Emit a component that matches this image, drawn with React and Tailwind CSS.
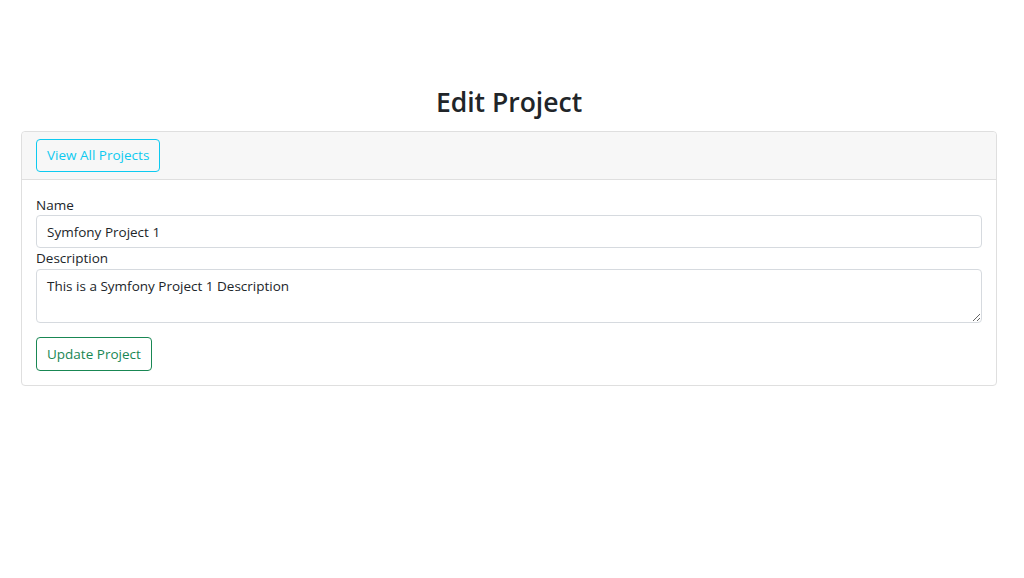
import React from 'react'

const App = () => {
  return (
    <div className="min-h-[578px] bg-white text-[#212529]" style={{ fontFamily: '"Open Sans", "Noto Sans", sans-serif' }}>
      <div className="pl-[21px] pr-[27px] pt-[84px]">
        <h1 className="text-center text-[26.5px] font-semibold leading-[36px] mb-[11px]">Edit Project</h1>
        <div className="border border-[#dfdfdf] rounded-[4px]">
          <div className="bg-[#f7f7f7] border-b border-[#dfdfdf] px-[14px] py-[7px] rounded-t-[4px]">
            <button type="button" className="h-[33px] px-[10px] border border-[#0dcaf0] rounded-[4px] text-[#0dcaf0] text-[13.5px] bg-transparent">
              View All Projects
            </button>
          </div>
          <div className="px-[14px] pt-[15px] pb-[14px]">
            <label className="block text-[13.5px] leading-[20px]">Name</label>
            <input
              type="text"
              defaultValue="Symfony Project 1"
              className="block w-full h-[33px] px-[10px] border border-[#d6dadf] rounded-[4px] text-[13.5px] text-[#212529] outline-none"
            />
            <label className="block text-[13.5px] leading-[20px] mt-0 mb-[1px]">Description</label>
            <textarea
              defaultValue="This is a Symfony Project 1 Description"
              className="block w-full h-[54px] px-[10px] py-[6px] border border-[#d6dadf] rounded-[4px] text-[13.5px] leading-[20px] text-[#212529] outline-none"
            />
            <button type="button" className="mt-[14px] h-[34px] px-[10px] border border-[#198754] rounded-[4px] text-[#198754] text-[13.5px] bg-transparent">
              Update Project
            </button>
          </div>
        </div>
      </div>
    </div>
  )
}

export default App
